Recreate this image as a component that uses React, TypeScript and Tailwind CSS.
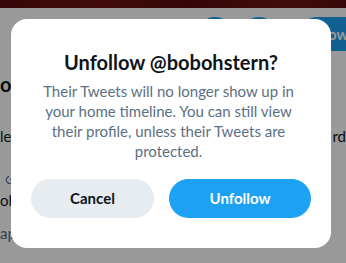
import { Link2 } from "lucide-react";

export default function App() {
  return (
    <div
      className="relative w-[346px] h-[263px] overflow-hidden bg-white"
      style={{ fontFamily: "Lato, 'Noto Sans', sans-serif" }}
    >
      {/* background page */}
      <div className="flex flex-col">
        <div className="h-[8px] bg-[linear-gradient(100deg,#5e0c0c,#6e1212_30%,#5a0b0b_55%,#701414_80%,#600d0d)]" />
        <div className="flex items-start justify-end pt-[9px] h-[43px]">
          <div className="w-[36px] h-[36px] rounded-full bg-[#1da1f2]" />
          <div className="ml-[8px] w-[36px] h-[36px] rounded-full bg-[#1da1f2]" />
          <div className="ml-[23px] h-[34px] w-[46px] overflow-hidden rounded-l-full bg-[#1da1f2] flex items-center pl-[4px] text-[15px] font-bold text-white whitespace-nowrap">
            Follow
          </div>
        </div>
        <div className="mt-[21px] h-[24px] leading-[24px] text-[20px] font-bold text-[#0f1419] whitespace-nowrap">
          ore
        </div>
        <div className="mt-[30px] h-[20px] leading-[20px] text-[15px] text-[#0f1419] flex justify-between whitespace-nowrap">
          <span>le:</span>
          <span>rd</span>
        </div>
        <div className="mt-[21px] h-[20px] flex items-center pl-[4px] text-[#5b7083]">
          <Link2 size={17} strokeWidth={1.6} className="-rotate-45" />
        </div>
        <div className="mt-[3px] h-[20px] leading-[20px] text-[15px] text-[#0f1419] whitespace-nowrap">
          ol
        </div>
        <div className="mt-[13px] h-[20px] leading-[20px] text-[15px] text-[#5b7083] whitespace-nowrap">
          ap
        </div>
      </div>

      {/* overlay */}
      <div className="absolute inset-0 bg-black/40" />

      {/* dialog */}
      <div className="absolute left-[11px] top-[19px] w-[320px] h-[229px] rounded-[16px] bg-white flex flex-col pt-[31px] pb-[30px]">
        <h2 className="h-[24px] leading-[24px] text-[20px] font-bold text-[#0f1419] text-center whitespace-nowrap">
          Unfollow @bobohstern?
        </h2>
        <p className="mt-[7px] pr-[5px] text-[15px] leading-[20px] text-[#5b7083] text-center">
          <span className="block whitespace-nowrap">Their Tweets will no longer show up in</span>
          <span className="block whitespace-nowrap">your home timeline. You can still view</span>
          <span className="block whitespace-nowrap">their profile, unless their Tweets are</span>
          <span className="block whitespace-nowrap">protected.</span>
        </p>
        <div className="mt-[18px] flex gap-[15px] px-[20px]">
          <button className="w-[123px] h-[39px] rounded-full bg-[#e6ecf0] text-[15px] font-bold text-[#0f1419]">
            Cancel
          </button>
          <button className="w-[142px] h-[39px] rounded-full bg-[#1da1f2] text-[15px] font-bold text-white">
            Unfollow
          </button>
        </div>
      </div>
    </div>
  );
}
